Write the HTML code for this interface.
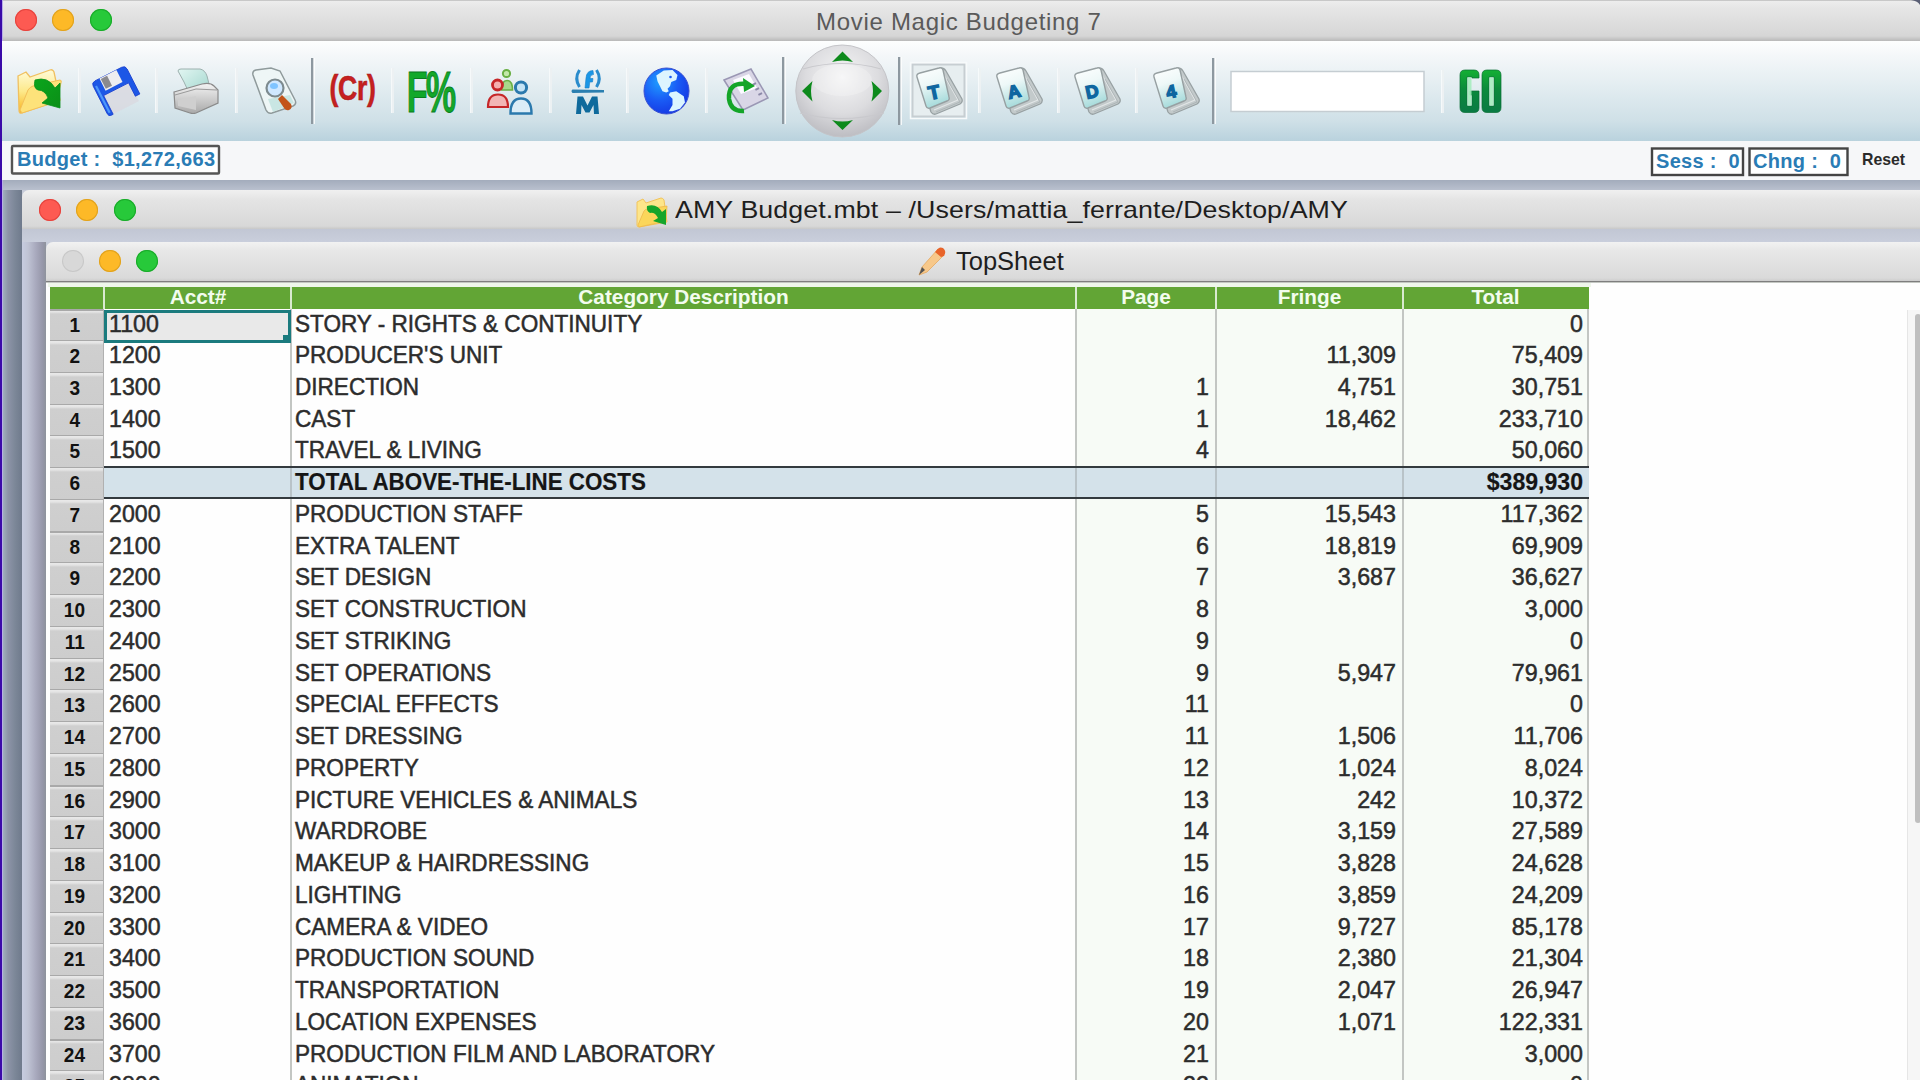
<!DOCTYPE html>
<html><head><meta charset="utf-8">
<style>
*{box-sizing:border-box;margin:0;padding:0}
html,body{width:1920px;height:1080px;overflow:hidden;background:#c6cbd9;font-family:"Liberation Sans",sans-serif}
.abs{position:absolute}
#desk{left:0;top:0;width:2px;height:1080px;background:#3a0aa8}
#deskl{left:2px;top:0;width:1px;height:1080px;background:#b8aee8}
#mainTitle{left:2px;top:0;width:1918px;height:41px;background:linear-gradient(#c8c8c8 0,#c8c8c8 1px,#ededed 1px,#e6e6e6 8px,#d6d6d6 36px,#c4c4c4 39px,#b9b9b9 41px)}
.tl{position:absolute;width:22px;height:22px;border-radius:50%}
.red{background:#fd5a52;box-shadow:inset 0 0 0 1px #e5443e}
.yel{background:#fdb927;box-shadow:inset 0 0 0 1px #e0a21f}
.grn{background:#27c93a;box-shadow:inset 0 0 0 1px #1aab2a}
.gry{background:#d8d8d8;box-shadow:inset 0 0 0 1px #c8c8c8}
#mainTitleText{left:816px;top:7.5px;font-size:24px;color:#5a5a5a;letter-spacing:0.7px;line-height:28px;white-space:nowrap}
#toolbar{left:2px;top:41px;width:1918px;height:100px;background:linear-gradient(#fdfefe 0,#f4f7f9 15px,#e3edf1 45px,#cfe0e7 80px,#b9d2dd 100px)}
#budgetbar{left:2px;top:141px;width:1918px;height:39px;background:#f6f7f9}
#band1{left:3px;top:180px;width:1917px;height:10px;background:linear-gradient(#a3acbc,#b9c0ce)}
#leftA{left:3px;top:190px;width:19px;height:890px;background:linear-gradient(90deg,#9fb0bc 0,#8d94a8 5px,#7c8798 12px,#6f7a8c 19px)}
#amyTitle{left:22px;top:190px;width:1898px;height:39px;border-radius:7px 0 0 0;background:linear-gradient(#f0f0f0 0,#e4e4e4 10px,#d8d8d8 36px,#c8c8c8 39px)}
#amyText{left:675px;top:196px;font-size:24px;color:#1e1e1e;letter-spacing:0.1px;line-height:28px;white-space:nowrap;transform:scaleX(1.115);transform-origin:left center}
#band2{left:22px;top:229px;width:1898px;height:13px;background:linear-gradient(#c2c7d4,#c9cedc)}
#leftB{left:22px;top:242px;width:24px;height:838px;background:linear-gradient(90deg,#c6cce0 0,#bfc3d4 6px,#a8a9bd 14px,#9596a8 21px,#8e939c 24px)}
#tsTitle{left:46px;top:242px;width:1874px;height:41px;border-radius:7px 0 0 0;background:linear-gradient(#f2f2f2 0,#e8e8e8 8px,#dadada 36px,#cfcfcf 38.5px,#808080 38.8px,#7c7c7c 40.3px,#e8ede6 40.6px)}
#tsText{left:956px;top:246px;font-size:25.5px;color:#1e1e1e;line-height:30px;white-space:nowrap;transform:scaleX(1.0);transform-origin:left center}
#content{left:46px;top:283px;width:1874px;height:797px;background:#fefefe}

.rn{left:50px;width:54px;height:31.74px;background:linear-gradient(#a9a9a9 0,#a9a9a9 1.5px,#e8e8e8 1.5px,#e4e4e4 3px,#cfcfcf 5px,#cdcdcd 100%);border-right:1px solid #b0b0b0;text-align:center;font-weight:bold;font-size:20.5px;line-height:31.74px;padding-top:0px;padding-right:4px;color:#111}
.rn span{display:inline-block;transform:scaleX(0.93)}
.cell{height:31.74px;font-size:24px;line-height:31.74px;color:#2c2c2c;-webkit-text-stroke:0.5px #2c2c2c;white-space:nowrap;margin-top:-1px;transform:scaleX(0.94);transform-origin:left center}
.cell.a{transform:scaleX(0.965)}
.cell.r{text-align:right;transform-origin:right center;transform:scaleX(0.97)}
.cell.b{font-weight:bold;color:#151515;-webkit-text-stroke:0.2px #151515;font-size:23.8px}
.htxt{height:21.5px;text-align:center;color:#f2fcee;font-weight:bold;font-size:20.8px;line-height:19px}
.btxt{font-size:20px;font-weight:bold;color:#2a7cb5;line-height:27px;white-space:nowrap;letter-spacing:0.3px}
</style></head><body>
<div class="abs" id="mainTitle"></div>
<div class="abs" id="desk"></div><div class="abs" id="deskl"></div>
<div class="tl red" style="left:15px;top:9px"></div>
<div class="tl yel" style="left:52px;top:9px"></div>
<div class="tl grn" style="left:90px;top:9px"></div>
<div class="abs" id="mainTitleText">Movie Magic Budgeting 7</div>
<div class="abs" id="toolbar"></div>
<div class="abs" id="budgetbar"></div>
<svg class="abs" style="left:0;top:0" width="1920" height="180" viewBox="0 0 1920 180">
<defs>
<linearGradient id="gFold" x1="0" y1="0" x2="0" y2="1"><stop offset="0" stop-color="#fffbd8"/><stop offset="0.5" stop-color="#fde98a"/><stop offset="1" stop-color="#f9b21c"/></linearGradient>
<linearGradient id="gArr" x1="0" y1="0" x2="1" y2="1"><stop offset="0" stop-color="#0aa51c"/><stop offset="1" stop-color="#0b8f17"/></linearGradient>
<linearGradient id="gBlue" x1="0" y1="0" x2="0" y2="1"><stop offset="0" stop-color="#1e7ff0"/><stop offset="1" stop-color="#1b4fe0"/></linearGradient>
<linearGradient id="gPrn" x1="0" y1="0" x2="0" y2="1"><stop offset="0" stop-color="#f4f4f4"/><stop offset="1" stop-color="#a9a9a9"/></linearGradient>
<linearGradient id="gPaper" x1="0" y1="0" x2="1" y2="1"><stop offset="0" stop-color="#e2f6f2"/><stop offset="1" stop-color="#9fd5cc"/></linearGradient>
<radialGradient id="gGlobe" cx="0.35" cy="0.3" r="0.8"><stop offset="0" stop-color="#1fa0ff"/><stop offset="0.5" stop-color="#1a5cf5"/><stop offset="1" stop-color="#1432e0"/></radialGradient>
<radialGradient id="gBall" cx="0.5" cy="0.35" r="0.65"><stop offset="0" stop-color="#f6f6f7"/><stop offset="0.6" stop-color="#dcdcdf"/><stop offset="1" stop-color="#bdbdc2"/></radialGradient>
<linearGradient id="gDoc" x1="0" y1="0" x2="0" y2="1"><stop offset="0" stop-color="#ffffff"/><stop offset="1" stop-color="#b5e3e3"/></linearGradient>
<linearGradient id="gGo" x1="0" y1="0" x2="0" y2="1"><stop offset="0" stop-color="#14b034"/><stop offset="0.45" stop-color="#0b8a3c"/><stop offset="1" stop-color="#0a7a44"/></linearGradient>
<linearGradient id="gDoc2" x1="0" y1="0" x2="0.3" y2="1"><stop offset="0" stop-color="#ffffff"/><stop offset="0.45" stop-color="#eef8f8"/><stop offset="1" stop-color="#a9dcdc"/></linearGradient>
<g id="docstack">
  <path d="M-19,-16 L3,-23 Q6,-23 8,-20 L24,8 Q25,11 22,13 L-2,23 Q-5,24 -7,21 Z" fill="#c3cacb" stroke="#98a1a3" stroke-width="1.3" stroke-linejoin="round"/>
  <path d="M6,-16 L20,9 L-4,19" fill="none" stroke="#e2e6e7" stroke-width="1.2"/>
  <path d="M9,-12 L22,11 L-2,21" fill="none" stroke="#aab2b4" stroke-width="0.9"/>
  <path d="M-21,-14 Q-22,-17 -18,-18 L1,-23 Q4,-24 5,-21 L11,6 Q12,9 9,10 L-8,17 Q-11,18 -12,15 Z" fill="url(#gDoc2)" stroke="#97a0a2" stroke-width="1.4" stroke-linejoin="round"/>
</g>
</defs>
<path d="M1911,0 L1920,0 L1920,5 Q1918,1 1911,0 Z" fill="#5a5f75"/>
<!-- separators thin -->
<g fill="#f7fafb" opacity="0.95">
<rect x="78" y="68" width="3" height="45"/><rect x="155" y="68" width="3" height="45"/><rect x="235" y="68" width="3" height="45"/>
<rect x="391" y="68" width="3" height="45"/><rect x="470" y="68" width="3" height="45"/><rect x="549" y="68" width="3" height="45"/>
<rect x="626" y="68" width="3" height="45"/><rect x="705" y="68" width="3" height="45"/>
<rect x="978" y="68" width="3" height="45"/><rect x="1057" y="68" width="3" height="45"/><rect x="1135" y="68" width="3" height="45"/><rect x="1441" y="70" width="3" height="43"/>
</g>
<g fill="#e3e9ec">
<rect x="79.5" y="68" width="1" height="45"/><rect x="156.5" y="68" width="1" height="45"/><rect x="236.5" y="68" width="1" height="45"/>
<rect x="392.5" y="68" width="1" height="45"/><rect x="471.5" y="68" width="1" height="45"/><rect x="550.5" y="68" width="1" height="45"/>
<rect x="627.5" y="68" width="1" height="45"/><rect x="706.5" y="68" width="1" height="45"/>
<rect x="979.5" y="68" width="1" height="45"/><rect x="1058.5" y="68" width="1" height="45"/><rect x="1136.5" y="68" width="1" height="45"/><rect x="1442.5" y="70" width="1" height="43"/>
</g>
<!-- dark separators -->
<g fill="#8d98a0"><rect x="311" y="58" width="2.5" height="66"/><rect x="782" y="57" width="2.5" height="67"/><rect x="898" y="57" width="2.5" height="68"/><rect x="1212" y="58" width="2.5" height="66"/></g>
<g fill="#ffffff" opacity="0.8"><rect x="313.5" y="58" width="1.5" height="66"/><rect x="784.5" y="57" width="1.5" height="67"/><rect x="900.5" y="57" width="1.5" height="68"/><rect x="1214.5" y="58" width="1.5" height="66"/></g>

<!-- 1 open folder -->
<g>
 <path d="M18,76 L26,72 L30,77 L50,70 Q53,69 54,72 L60,100 L22,113 Q19,114 19,110 Z" fill="url(#gFold)" stroke="#f0c060" stroke-width="1.3"/>
 <path d="M20,110 L28,90 Q30,87 33,86 L60,80 Q62,80 61,83 L56,102 L22,113 Z" fill="#fde27a" stroke="#f3c05a" stroke-width="1"/>
 <path d="M35,80 Q48,76 55,88 L60,83 L60,108 L42,103 L48,98 Q45,90 38,90 Q33,88 35,80 Z" fill="url(#gArr)" stroke="#08901a" stroke-width="0.8"/>
</g>
<!-- 2 floppy -->
<g transform="translate(117,91) rotate(-27)">
 <path d="M-14,-2 L14,-2 L15,19 L-14,19 Z" fill="#d9d9e0" opacity="0.85"/>
 <path d="M-19,-15 Q-19,-19 -15,-19 L15,-19 Q19,-19 19,-15 L19,13 L14,13 L14,-2 L-14,-2 L-14,19 L-16,19 Q-19,19 -19,16 Z" fill="#1d57e6" stroke="#1a3fcf" stroke-width="0.8"/>
 <rect x="-17.5" y="-14" width="2.2" height="30" fill="#5aa8ff" opacity="0.8"/>
 <rect x="-10" y="-19" width="19" height="13.5" fill="#ededf0"/>
 <rect x="-9" y="-18" width="7" height="11" fill="#8a8a8f"/>
</g>
<!-- 3 printer -->
<g>
 <path d="M184,82 L178,71 Q178,69 181,69 L200,69 Q205,70 207,76 L210,88 L190,95 Z" fill="url(#gPaper)" stroke="#9cb0ae" stroke-width="1"/>
 <path d="M174,92 L202,84 Q210,82 214,86 L218,90 L218,103 L196,113 Q193,114 190,113 L175,108 Z" fill="url(#gPrn)" stroke="#8a8a8a" stroke-width="1.2"/>
 <path d="M175,95 L196,89 L217,90" fill="none" stroke="#9a9a9a" stroke-width="1"/>
 <path d="M178,100 L196,96 L196,110 L178,106 Z" fill="#cfcfcf"/>
</g>
<!-- 4 preview doc -->
<g>
 <path d="M253,75 Q252,71 256,70 L271,68 L280,71 L295,100 Q297,104 293,106 L272,113 Q268,114 266,110 Z" fill="#eef6f6" stroke="#8f9a9b" stroke-width="1.5"/>
 <path d="M268,99 L290,95 L294,103 L273,112 Z" fill="#b9e0dc" opacity="0.7"/>
 <circle cx="275" cy="88" r="8.5" fill="#cfe8ff" stroke="#7d8b8f" stroke-width="2.2"/>
 <ellipse cx="274" cy="86" rx="4" ry="3" fill="#7fc4ff"/>
 <path d="M282,95 L291,104 Q293,108 289,110 Q286,111 284,108 L278,99 Z" fill="#c3541a"/>
</g>
<!-- 5 (Cr) -->
<text x="352.5" y="100.5" text-anchor="middle" font-family="Liberation Sans" font-weight="bold" font-size="35" fill="#c62020" stroke="#a81818" stroke-width="0.6" transform="translate(352.5,0) scale(0.76,1) translate(-352.5,0)" letter-spacing="-0.5">(Cr)</text>
<!-- 6 F% -->
<text x="430.5" y="112" text-anchor="middle" font-family="Liberation Sans" font-weight="bold" font-size="57" fill="#12a82a" stroke="#0a7d1e" stroke-width="1" transform="translate(430.5,0) scale(0.6,1) translate(-430.5,0)" letter-spacing="-3">F%</text>
<!-- 7 people -->
<g>
 <circle cx="506.5" cy="73.5" r="3.6" fill="#c4e8aa" stroke="#6aaf45" stroke-width="2"/>
 <path d="M501.5,90 Q501.5,80.5 507,80.5 Q512.5,80.5 512.5,90 Z" fill="#a8d88a" stroke="#6aaf45" stroke-width="1.6"/>
 <circle cx="497.5" cy="85" r="5" fill="#f4b0b0" stroke="#c62628" stroke-width="2.8"/>
 <path d="M488,107 Q488,94.5 498,94.5 Q508,94.5 508,107 Z" fill="#f2b5b5" stroke="#c62628" stroke-width="2.2"/>
 <circle cx="521" cy="87.5" r="5.6" fill="#c6e4f5" stroke="#2b79ad" stroke-width="3"/>
 <path d="M510.5,113.5 Q510.5,98.5 521,98.5 Q531.5,98.5 531.5,113.5 Z" fill="#dcedf7" stroke="#2b79ad" stroke-width="2.4"/>
</g>
<!-- 8 (f) M -->
<g>
 <path d="M579.5,70 Q574,78.5 579.5,87" fill="none" stroke="#2a8ccc" stroke-width="3"/>
 <path d="M596.5,70 Q602,78.5 596.5,87" fill="none" stroke="#2a8ccc" stroke-width="3"/>
 <path d="M585,88 L586,78 Q586.5,70.5 593,70.5 L593.5,74.5 Q590,74.5 590,78.5 L593,78.5 L592.5,82 L589.8,82 L589,88 Z" fill="#1a96e6" stroke="#1a7fc8" stroke-width="0.6"/>
 <path d="M572.5,89.5 L604,90 L604,92.5 L572.5,93 Q570.5,91.2 572.5,89.5 Z" fill="#2b7fb0"/>
 <path d="M576,114 L577.5,96.5 L583,96.5 L587.5,105.5 L592,96.5 L597.5,96.5 L599,114 L594,114 L593.5,105 L589.5,112.5 L585.5,112.5 L581.5,105 L581,114 Z" fill="#0f6a9c"/>
</g>
<!-- 9 globe -->
<g>
 <ellipse cx="666.5" cy="91" rx="22.5" ry="23" fill="url(#gGlobe)" stroke="#3a50d0" stroke-width="1"/>
 <path d="M656.25,75.6 L663.75,70.6 L672.5,70 L677.5,75 L676.25,80 L671.25,81.9 L670,86.25 L667.5,88.75 L668.75,91.25 L666.25,92.5 L662.5,91.25 L660,86.25 L657.5,81.25 Z" fill="#dcf5ff"/>
 <path d="M670,92.5 L676.25,91.25 L683.75,96.25 L685,102.5 L680,108.75 L672.5,111.25 L668.75,111.25 L672.5,105 L672.5,98.75 L668.75,95 Z" fill="#dcf5ff"/>
 <circle cx="670.5" cy="77" r="1.3" fill="#1a5cf5"/>
</g>
<!-- 10 refresh doc -->
<g>
 <path d="M724,80 L751,69 L768,98 L743,110 Z" fill="#d9d6e6" stroke="#9a97b4" stroke-width="1.5"/>
 <path d="M733,80 L749,74 L757,88 L741,94 Z" fill="#fbfbff"/>
 <g fill="#8c89a8"><rect x="752" y="84" width="4" height="2" transform="rotate(-25 752 84)"/><rect x="755" y="89" width="4" height="2" transform="rotate(-25 755 89)"/><rect x="758" y="94" width="4" height="2" transform="rotate(-25 758 94)"/></g>
 <path d="M746,84 Q728,82 729,99 Q731,112 744,111" fill="none" stroke="#14a528" stroke-width="4.5"/>
 <path d="M743,78 L755,86 L744,92 Z" fill="#14a528"/>
</g>
<!-- 11 nav ball -->
<g>
 <ellipse cx="842.3" cy="91" rx="46.5" ry="46" fill="url(#gBall)" stroke="#c4c4c8" stroke-width="1"/>
 <path d="M803,69 Q842,58 881,69" fill="none" stroke="#c9c9cd" stroke-width="1.2"/>
 <path d="M800,113 Q842,124 884,113" fill="none" stroke="#c9c9cd" stroke-width="1.2"/>
 <ellipse cx="842" cy="80" rx="30" ry="16" fill="#fafafa" opacity="0.3"/>
 <path d="M832,62 L842.5,51.5 L853,62 Q842.5,59 832,62 Z" fill="#0d8a1c"/>
 <path d="M832,120 L842.5,130 L853,120 Q842.5,123 832,120 Z" fill="#0d8a1c"/>
 <path d="M812.5,81 L802,91 L812.5,101.5 Q809.5,91 812.5,81 Z" fill="#0d8a1c"/>
 <path d="M871.5,81 L882,91 L871.5,101.5 Q874.5,91 871.5,81 Z" fill="#0d8a1c"/>
</g>
<!-- 12 T button highlight -->
<rect x="912.5" y="64.5" width="52" height="52" fill="#e7eef0" stroke="#c7ced2" stroke-width="2"/>
<rect x="910.5" y="62.5" width="56" height="56" fill="none" stroke="#f7fafb" stroke-width="1.5"/>
<g transform="translate(938,91)"><use href="#docstack"/><text x="-4" y="7" text-anchor="middle" font-family="Liberation Sans" font-weight="bold" font-size="19" fill="#0e66a0" stroke="#0e66a0" stroke-width="1.4" transform="rotate(-12)">T</text></g>
<g transform="translate(1018,91)"><use href="#docstack"/><text x="-4" y="6" text-anchor="middle" font-family="Liberation Sans" font-weight="bold" font-size="18" fill="#0e66a0" stroke="#0e66a0" stroke-width="1.4" transform="rotate(-12)">A</text></g>
<g transform="translate(1096,91)"><use href="#docstack"/><text x="-4" y="6" text-anchor="middle" font-family="Liberation Sans" font-weight="bold" font-size="18" fill="#0e66a0" stroke="#0e66a0" stroke-width="1.4" transform="rotate(-12)">D</text></g>
<g transform="translate(1175,91)"><use href="#docstack"/><text x="-4" y="6" text-anchor="middle" font-family="Liberation Sans" font-weight="bold" font-size="18" fill="#0e66a0" stroke="#0e66a0" stroke-width="1.4" transform="rotate(-12)">4</text></g>
<!-- textbox -->
<rect x="1231" y="71.5" width="193" height="40" fill="#ffffff" stroke="#c5cdd2" stroke-width="1.5"/>
<!-- GO -->
<path d="M1465,70 h9 q5,0 5,5 v3 h-7 v-1 h-5 v29 h5 v-11 h-2 v-4 h9 v17 q0,4.5 -5,4.5 h-9 q-5,0 -5,-5 v-32.5 q0,-5 5,-5 z" fill="url(#gGo)" stroke="#0a6e34" stroke-width="0.7"/>
<rect x="1467.5" y="77.5" width="4" height="28" fill="#a6ecbf" opacity="0.9"/>
<path fill-rule="evenodd" d="M1487,70 h9 q5,0 5,5 v32.5 q0,5 -5,5 h-9 q-5,0 -5,-5 v-32.5 q0,-5 5,-5 z M1489,77 v29 h5 v-29 z" fill="url(#gGo)" stroke="#0a6e34" stroke-width="0.7"/>
<rect x="1489.5" y="77.5" width="4" height="28" fill="#a6ecbf" opacity="0.9"/>
<!-- budget bar boxes -->
<rect x="12" y="146" width="207" height="27.5" fill="#ffffff" stroke="#555" stroke-width="2.4" rx="1"/>
<rect x="1652" y="148.5" width="91" height="26.5" fill="#ffffff" stroke="#444" stroke-width="2.4"/>
<rect x="1749.5" y="148.5" width="98" height="26.5" fill="#ffffff" stroke="#444" stroke-width="2.4"/>
</svg>
<div class="abs btxt" style="left:17px;top:146px">Budget :&nbsp; $1,272,663</div>
<div class="abs btxt" style="left:1656px;top:148px">Sess :&nbsp; 0</div>
<div class="abs btxt" style="left:1753px;top:148px">Chng :&nbsp; 0</div>
<div class="abs" style="left:1862px;top:150px;font-size:17px;font-weight:bold;color:#2a2a2a;transform:scaleX(0.93);transform-origin:left">Reset</div>

<div class="abs" id="band1"></div>
<div class="abs" id="leftA"></div>
<div class="abs" id="amyTitle"></div>
<div class="tl red" style="left:39px;top:199px"></div>
<div class="tl yel" style="left:76px;top:199px"></div>
<div class="tl grn" style="left:114px;top:199px"></div>
<div class="abs" id="amyText">AMY Budget.mbt – /Users/mattia_ferrante/Desktop/AMY</div>
<div class="abs" id="band2"></div>
<div class="abs" id="leftB"></div>
<div class="abs" id="tsTitle"></div>
<div class="tl gry" style="left:62px;top:250px"></div>
<div class="tl yel" style="left:99px;top:250px"></div>
<div class="tl grn" style="left:136px;top:250px"></div>
<div class="abs" id="tsText">TopSheet</div>
<svg class="abs" style="left:630px;top:194px" width="40" height="36" viewBox="0 0 40 36">
 <path d="M7,8 L13,5 L16,9 L31,4 Q33,4 34,6 L37,28 L9,33 Q7,33 7,31 Z" fill="#fde58a" stroke="#f2c45c" stroke-width="1"/>
 <path d="M8,31 L14,17 Q15,15 18,15 L37,12 L36,27 L9,33 Z" fill="#fbd65a" stroke="#efb84a" stroke-width="0.8"/>
 <path d="M17,12 Q27,9 32,18 L36,15 L36,31 L23,27 L28,24 Q25,18 20,19 Q16,17 17,12 Z" fill="#16a52a"/>
</svg>
<svg class="abs" style="left:914px;top:243px" width="36" height="36" viewBox="0 0 36 36">
 <path d="M5,32 L8,24 L24,6 L30,12 L13,29 Z" fill="#f7c88a" stroke="#e6a860" stroke-width="0.8"/>
 <path d="M5,32 L8,24 L11,27 Z" fill="#555"/>
 <path d="M22,8 Q25,3 29,5 Q33,8 30,13 L27,14 L21,9 Z" fill="#e8642a"/>
</svg>
<div class="abs" id="content"></div>
<div class="abs" style="left:48px;top:283px;width:1543px;height:4px;background:#eef6ea"></div>
<div class="abs hdr" style="left:50px;top:287px;width:1539px;height:21.5px;background:#62a535"></div>
<div class="abs htxt" style="left:50px;top:287px;width:53px"></div>
<div class="abs htxt" style="left:106px;top:287px;width:184px">Acct#</div>
<div class="abs htxt" style="left:292px;top:287px;width:783px">Category Description</div>
<div class="abs htxt" style="left:1077px;top:287px;width:138px">Page</div>
<div class="abs htxt" style="left:1217px;top:287px;width:185px">Fringe</div>
<div class="abs htxt" style="left:1404px;top:287px;width:183px">Total</div>
<div class="abs" style="left:103px;top:287px;width:2px;height:21.5px;background:#d9ead0"></div>
<div class="abs" style="left:290px;top:287px;width:2px;height:21.5px;background:#d9ead0"></div>
<div class="abs" style="left:1075px;top:287px;width:2px;height:21.5px;background:#d9ead0"></div>
<div class="abs" style="left:1215px;top:287px;width:2px;height:21.5px;background:#d9ead0"></div>
<div class="abs" style="left:1402px;top:287px;width:2px;height:21.5px;background:#d9ead0"></div>
<div class="abs" style="left:1077px;top:308.5px;width:510px;height:772px;background:#f7fbf6"></div>
<div class="abs" style="left:290px;top:308.5px;width:2px;height:772px;background:#c3c6c3"></div>
<div class="abs" style="left:1075px;top:308.5px;width:2px;height:772px;background:#c3c6c3"></div>
<div class="abs" style="left:1215px;top:308.5px;width:2px;height:772px;background:#c3c6c3"></div>
<div class="abs" style="left:1402px;top:308.5px;width:2px;height:772px;background:#c3c6c3"></div>
<div class="abs" style="left:1587px;top:308.5px;width:2px;height:772px;background:#c3c6c3"></div>
<div class="abs rn" style="top:308.50px"><span>1</span></div>
<div class="abs cell a" style="left:108.5px;top:308.50px">1100</div>
<div class="abs cell" style="left:294.5px;top:308.50px">STORY - RIGHTS &amp; CONTINUITY</div>
<div class="abs cell r" style="left:1404px;width:179px;top:308.50px">0</div>
<div class="abs rn" style="top:340.24px"><span>2</span></div>
<div class="abs cell a" style="left:108.5px;top:340.24px">1200</div>
<div class="abs cell" style="left:294.5px;top:340.24px">PRODUCER&#x27;S UNIT</div>
<div class="abs cell r" style="left:1217px;width:179px;top:340.24px">11,309</div>
<div class="abs cell r" style="left:1404px;width:179px;top:340.24px">75,409</div>
<div class="abs rn" style="top:371.98px"><span>3</span></div>
<div class="abs cell a" style="left:108.5px;top:371.98px">1300</div>
<div class="abs cell" style="left:294.5px;top:371.98px">DIRECTION</div>
<div class="abs cell r" style="left:1077px;width:132px;top:371.98px">1</div>
<div class="abs cell r" style="left:1217px;width:179px;top:371.98px">4,751</div>
<div class="abs cell r" style="left:1404px;width:179px;top:371.98px">30,751</div>
<div class="abs rn" style="top:403.72px"><span>4</span></div>
<div class="abs cell a" style="left:108.5px;top:403.72px">1400</div>
<div class="abs cell" style="left:294.5px;top:403.72px">CAST</div>
<div class="abs cell r" style="left:1077px;width:132px;top:403.72px">1</div>
<div class="abs cell r" style="left:1217px;width:179px;top:403.72px">18,462</div>
<div class="abs cell r" style="left:1404px;width:179px;top:403.72px">233,710</div>
<div class="abs rn" style="top:435.46px"><span>5</span></div>
<div class="abs cell a" style="left:108.5px;top:435.46px">1500</div>
<div class="abs cell" style="left:294.5px;top:435.46px">TRAVEL &amp; LIVING</div>
<div class="abs cell r" style="left:1077px;width:132px;top:435.46px">4</div>
<div class="abs cell r" style="left:1404px;width:179px;top:435.46px">50,060</div>
<div class="abs rn" style="top:467.20px"><span>6</span></div>
<div class="abs" style="left:104px;top:466.20px;width:1485px;height:33.24px;background:#d4e2ea;border-top:2px solid #333a3e;border-bottom:2px solid #333a3e"></div>
<div class="abs" style="left:290px;top:468.20px;width:2px;height:29.24px;background:#b9c3c8"></div>
<div class="abs" style="left:1075px;top:468.20px;width:2px;height:29.24px;background:#b9c3c8"></div>
<div class="abs" style="left:1215px;top:468.20px;width:2px;height:29.24px;background:#b9c3c8"></div>
<div class="abs" style="left:1402px;top:468.20px;width:2px;height:29.24px;background:#b9c3c8"></div>
<div class="abs cell b" style="left:294.5px;top:467.20px">TOTAL ABOVE-THE-LINE COSTS</div>
<div class="abs cell b r" style="left:1404px;width:179px;top:467.20px">$389,930</div>
<div class="abs rn" style="top:498.94px"><span>7</span></div>
<div class="abs cell a" style="left:108.5px;top:498.94px">2000</div>
<div class="abs cell" style="left:294.5px;top:498.94px">PRODUCTION STAFF</div>
<div class="abs cell r" style="left:1077px;width:132px;top:498.94px">5</div>
<div class="abs cell r" style="left:1217px;width:179px;top:498.94px">15,543</div>
<div class="abs cell r" style="left:1404px;width:179px;top:498.94px">117,362</div>
<div class="abs rn" style="top:530.68px"><span>8</span></div>
<div class="abs cell a" style="left:108.5px;top:530.68px">2100</div>
<div class="abs cell" style="left:294.5px;top:530.68px">EXTRA TALENT</div>
<div class="abs cell r" style="left:1077px;width:132px;top:530.68px">6</div>
<div class="abs cell r" style="left:1217px;width:179px;top:530.68px">18,819</div>
<div class="abs cell r" style="left:1404px;width:179px;top:530.68px">69,909</div>
<div class="abs rn" style="top:562.42px"><span>9</span></div>
<div class="abs cell a" style="left:108.5px;top:562.42px">2200</div>
<div class="abs cell" style="left:294.5px;top:562.42px">SET DESIGN</div>
<div class="abs cell r" style="left:1077px;width:132px;top:562.42px">7</div>
<div class="abs cell r" style="left:1217px;width:179px;top:562.42px">3,687</div>
<div class="abs cell r" style="left:1404px;width:179px;top:562.42px">36,627</div>
<div class="abs rn" style="top:594.16px"><span>10</span></div>
<div class="abs cell a" style="left:108.5px;top:594.16px">2300</div>
<div class="abs cell" style="left:294.5px;top:594.16px">SET CONSTRUCTION</div>
<div class="abs cell r" style="left:1077px;width:132px;top:594.16px">8</div>
<div class="abs cell r" style="left:1404px;width:179px;top:594.16px">3,000</div>
<div class="abs rn" style="top:625.90px"><span>11</span></div>
<div class="abs cell a" style="left:108.5px;top:625.90px">2400</div>
<div class="abs cell" style="left:294.5px;top:625.90px">SET STRIKING</div>
<div class="abs cell r" style="left:1077px;width:132px;top:625.90px">9</div>
<div class="abs cell r" style="left:1404px;width:179px;top:625.90px">0</div>
<div class="abs rn" style="top:657.64px"><span>12</span></div>
<div class="abs cell a" style="left:108.5px;top:657.64px">2500</div>
<div class="abs cell" style="left:294.5px;top:657.64px">SET OPERATIONS</div>
<div class="abs cell r" style="left:1077px;width:132px;top:657.64px">9</div>
<div class="abs cell r" style="left:1217px;width:179px;top:657.64px">5,947</div>
<div class="abs cell r" style="left:1404px;width:179px;top:657.64px">79,961</div>
<div class="abs rn" style="top:689.38px"><span>13</span></div>
<div class="abs cell a" style="left:108.5px;top:689.38px">2600</div>
<div class="abs cell" style="left:294.5px;top:689.38px">SPECIAL EFFECTS</div>
<div class="abs cell r" style="left:1077px;width:132px;top:689.38px">11</div>
<div class="abs cell r" style="left:1404px;width:179px;top:689.38px">0</div>
<div class="abs rn" style="top:721.12px"><span>14</span></div>
<div class="abs cell a" style="left:108.5px;top:721.12px">2700</div>
<div class="abs cell" style="left:294.5px;top:721.12px">SET DRESSING</div>
<div class="abs cell r" style="left:1077px;width:132px;top:721.12px">11</div>
<div class="abs cell r" style="left:1217px;width:179px;top:721.12px">1,506</div>
<div class="abs cell r" style="left:1404px;width:179px;top:721.12px">11,706</div>
<div class="abs rn" style="top:752.86px"><span>15</span></div>
<div class="abs cell a" style="left:108.5px;top:752.86px">2800</div>
<div class="abs cell" style="left:294.5px;top:752.86px">PROPERTY</div>
<div class="abs cell r" style="left:1077px;width:132px;top:752.86px">12</div>
<div class="abs cell r" style="left:1217px;width:179px;top:752.86px">1,024</div>
<div class="abs cell r" style="left:1404px;width:179px;top:752.86px">8,024</div>
<div class="abs rn" style="top:784.60px"><span>16</span></div>
<div class="abs cell a" style="left:108.5px;top:784.60px">2900</div>
<div class="abs cell" style="left:294.5px;top:784.60px">PICTURE VEHICLES &amp; ANIMALS</div>
<div class="abs cell r" style="left:1077px;width:132px;top:784.60px">13</div>
<div class="abs cell r" style="left:1217px;width:179px;top:784.60px">242</div>
<div class="abs cell r" style="left:1404px;width:179px;top:784.60px">10,372</div>
<div class="abs rn" style="top:816.34px"><span>17</span></div>
<div class="abs cell a" style="left:108.5px;top:816.34px">3000</div>
<div class="abs cell" style="left:294.5px;top:816.34px">WARDROBE</div>
<div class="abs cell r" style="left:1077px;width:132px;top:816.34px">14</div>
<div class="abs cell r" style="left:1217px;width:179px;top:816.34px">3,159</div>
<div class="abs cell r" style="left:1404px;width:179px;top:816.34px">27,589</div>
<div class="abs rn" style="top:848.08px"><span>18</span></div>
<div class="abs cell a" style="left:108.5px;top:848.08px">3100</div>
<div class="abs cell" style="left:294.5px;top:848.08px">MAKEUP &amp; HAIRDRESSING</div>
<div class="abs cell r" style="left:1077px;width:132px;top:848.08px">15</div>
<div class="abs cell r" style="left:1217px;width:179px;top:848.08px">3,828</div>
<div class="abs cell r" style="left:1404px;width:179px;top:848.08px">24,628</div>
<div class="abs rn" style="top:879.82px"><span>19</span></div>
<div class="abs cell a" style="left:108.5px;top:879.82px">3200</div>
<div class="abs cell" style="left:294.5px;top:879.82px">LIGHTING</div>
<div class="abs cell r" style="left:1077px;width:132px;top:879.82px">16</div>
<div class="abs cell r" style="left:1217px;width:179px;top:879.82px">3,859</div>
<div class="abs cell r" style="left:1404px;width:179px;top:879.82px">24,209</div>
<div class="abs rn" style="top:911.56px"><span>20</span></div>
<div class="abs cell a" style="left:108.5px;top:911.56px">3300</div>
<div class="abs cell" style="left:294.5px;top:911.56px">CAMERA &amp; VIDEO</div>
<div class="abs cell r" style="left:1077px;width:132px;top:911.56px">17</div>
<div class="abs cell r" style="left:1217px;width:179px;top:911.56px">9,727</div>
<div class="abs cell r" style="left:1404px;width:179px;top:911.56px">85,178</div>
<div class="abs rn" style="top:943.30px"><span>21</span></div>
<div class="abs cell a" style="left:108.5px;top:943.30px">3400</div>
<div class="abs cell" style="left:294.5px;top:943.30px">PRODUCTION SOUND</div>
<div class="abs cell r" style="left:1077px;width:132px;top:943.30px">18</div>
<div class="abs cell r" style="left:1217px;width:179px;top:943.30px">2,380</div>
<div class="abs cell r" style="left:1404px;width:179px;top:943.30px">21,304</div>
<div class="abs rn" style="top:975.04px"><span>22</span></div>
<div class="abs cell a" style="left:108.5px;top:975.04px">3500</div>
<div class="abs cell" style="left:294.5px;top:975.04px">TRANSPORTATION</div>
<div class="abs cell r" style="left:1077px;width:132px;top:975.04px">19</div>
<div class="abs cell r" style="left:1217px;width:179px;top:975.04px">2,047</div>
<div class="abs cell r" style="left:1404px;width:179px;top:975.04px">26,947</div>
<div class="abs rn" style="top:1006.78px"><span>23</span></div>
<div class="abs cell a" style="left:108.5px;top:1006.78px">3600</div>
<div class="abs cell" style="left:294.5px;top:1006.78px">LOCATION EXPENSES</div>
<div class="abs cell r" style="left:1077px;width:132px;top:1006.78px">20</div>
<div class="abs cell r" style="left:1217px;width:179px;top:1006.78px">1,071</div>
<div class="abs cell r" style="left:1404px;width:179px;top:1006.78px">122,331</div>
<div class="abs rn" style="top:1038.52px"><span>24</span></div>
<div class="abs cell a" style="left:108.5px;top:1038.52px">3700</div>
<div class="abs cell" style="left:294.5px;top:1038.52px">PRODUCTION FILM AND LABORATORY</div>
<div class="abs cell r" style="left:1077px;width:132px;top:1038.52px">21</div>
<div class="abs cell r" style="left:1404px;width:179px;top:1038.52px">3,000</div>
<div class="abs rn" style="top:1070.26px"><span>25</span></div>
<div class="abs cell a" style="left:108.5px;top:1070.26px">3800</div>
<div class="abs cell" style="left:294.5px;top:1070.26px">ANIMATION</div>
<div class="abs cell r" style="left:1077px;width:132px;top:1070.26px">22</div>
<div class="abs cell r" style="left:1404px;width:179px;top:1070.26px">0</div>
<div class="abs" style="left:104px;top:309.5px;width:187px;height:33px;border:3px solid #1b7b7e;background:#e9e9e9"></div>
<div class="abs cell a" style="left:108.5px;top:308.50px">1100</div>
<div class="abs" style="left:283px;top:334.5px;width:8px;height:8px;background:#1b7b7e"></div>
<div class="abs" style="left:1907px;top:310px;width:13px;height:770px;background:#f6f6f6;border-left:1px solid #e6e6e6"></div>
<div class="abs" style="left:1915px;top:314px;width:6px;height:509px;border-radius:3px;background:#bfbfbf"></div>
</body></html>
